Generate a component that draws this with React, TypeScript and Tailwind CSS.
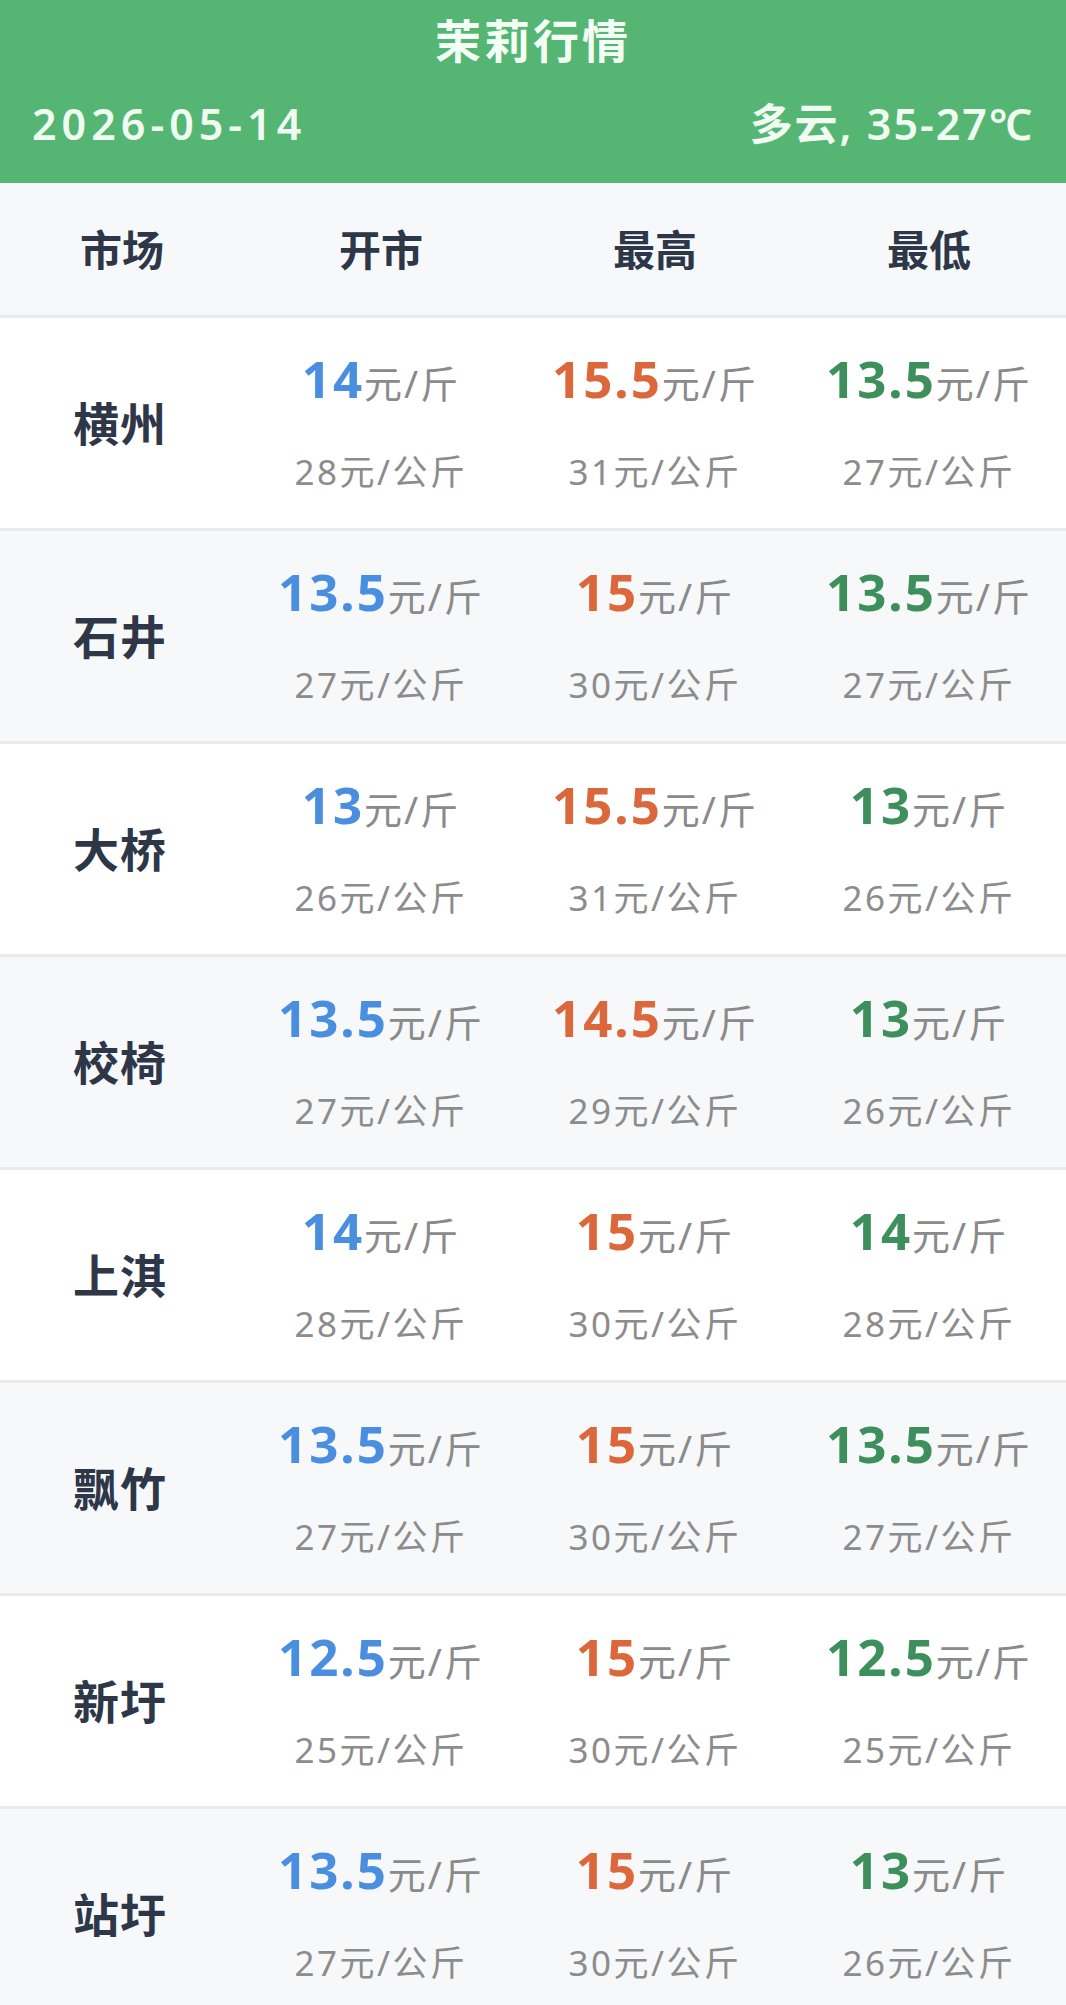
type Price = { open: string; high: string; low: string }

type Row = { market: string } & Price

const rows: Row[] = [
  { market: "横州", open: "14", high: "15.5", low: "13.5" },
  { market: "石井", open: "13.5", high: "15", low: "13.5" },
  { market: "大桥", open: "13", high: "15.5", low: "13" },
  { market: "校椅", open: "13.5", high: "14.5", low: "13" },
  { market: "上淇", open: "14", high: "15", low: "14" },
  { market: "飘竹", open: "13.5", high: "15", low: "13.5" },
  { market: "新圩", open: "12.5", high: "15", low: "12.5" },
  { market: "站圩", open: "13.5", high: "15", low: "13" },
]

const FONT = { fontFamily: '"Noto Sans", "Noto Sans CJK SC", sans-serif' }

function perKilo(v: string) {
  const n = parseFloat(v) * 2
  return Number.isInteger(n) ? String(n) : n.toFixed(1)
}

function PriceCell({ value, color }: { value: string; color: string }) {
  return (
    <div className="flex flex-col items-center pt-[32px]">
      <div className="flex h-[56px] items-baseline justify-center leading-[56px]">
        <span className={`text-[51px] font-bold tracking-[2px] ${color}`}>{value}</span>
        <span className="text-[38px] tracking-[2px] text-[#8a8a8a]">元/斤</span>
      </div>
      <div className="mt-[46px] h-[40px] text-[35px] leading-[40px] tracking-[2.5px] text-[#8c8c8c]">
        {perKilo(value)}元/公斤
      </div>
    </div>
  )
}

export default function App() {
  return (
    <div className="min-h-[2005px] w-[1066px] overflow-hidden bg-white" style={FONT}>
      <header className="flex h-[183px] flex-col bg-[#55b673] px-[32px] text-white">
        <h1 className="mt-[12px] text-center text-[46px] font-bold leading-[56px] tracking-[3px] text-[#f4fff6]">
          茉莉行情
        </h1>
        <div className="mt-[31px] flex items-center justify-between leading-[50px] text-[#f0fbf2]">
          <span className="text-[43px] font-semibold tracking-[5px]">2026-05-14</span>
          <span className="text-[43px] font-semibold tracking-[2px]">多云, 35-27℃</span>
        </div>
      </header>

      <div className="grid h-[135px] grid-cols-[244px_274px_274px_274px] items-center border-b-[3px] border-[#e8eaee] bg-[#f7f8fa] text-[42px] font-bold text-[#2d3748]">
        <div className="text-center">市场</div>
        <div className="text-center">开市</div>
        <div className="text-center">最高</div>
        <div className="text-center">最低</div>
      </div>

      {rows.map((r, i) => (
        <div
          key={r.market}
          className={`grid h-[213px] shrink-0 grid-cols-[244px_274px_274px_274px] border-b-[3px] border-[#e8eaee] ${
            i % 2 === 1 ? "bg-[#f7f8fa]" : "bg-white"
          }`}
        >
          <div className="flex items-center justify-center pr-[4px] text-[46px] font-bold tracking-[1px] text-[#2d3748]">
            {r.market}
          </div>
          <PriceCell value={r.open} color="text-[#4a8ee0]" />
          <PriceCell value={r.high} color="text-[#db673b]" />
          <PriceCell value={r.low} color="text-[#3d8f5b]" />
        </div>
      ))}
    </div>
  )
}
